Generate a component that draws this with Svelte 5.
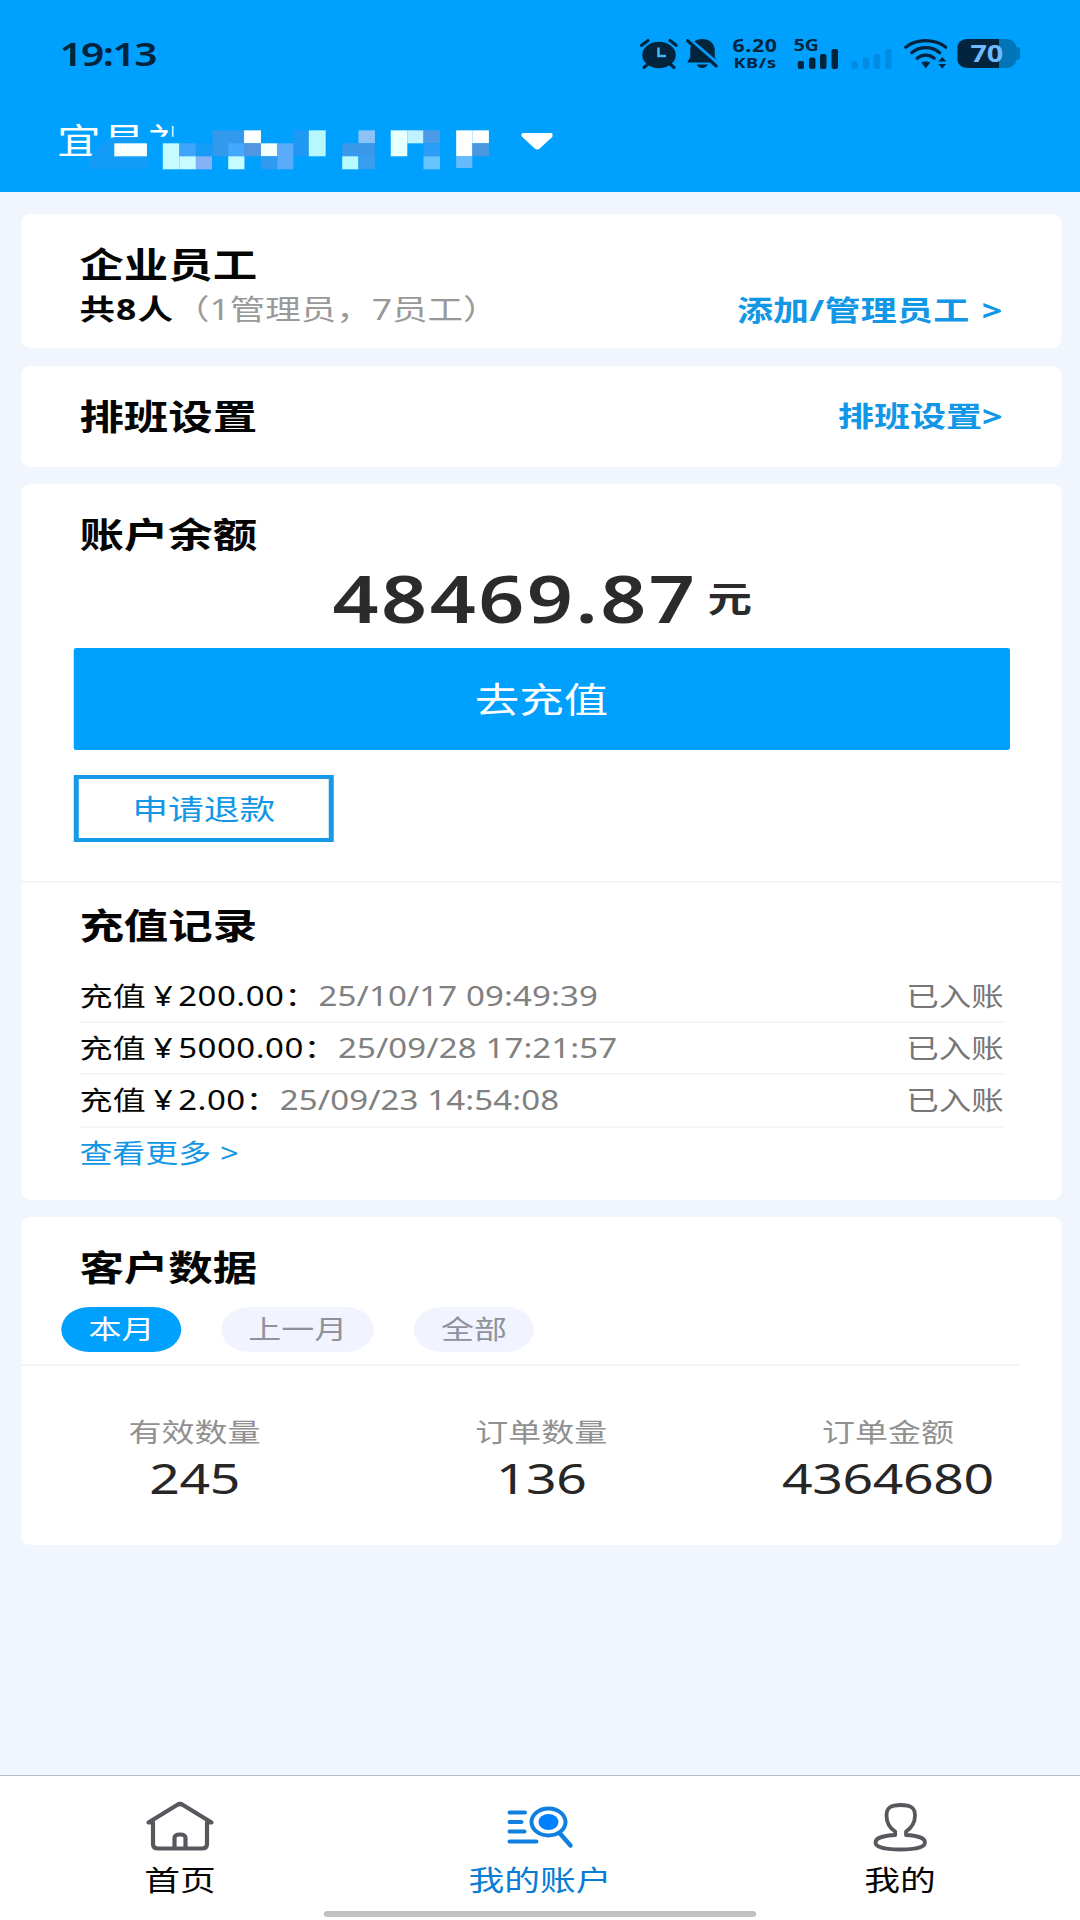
<script>
  const records = [
    { amount: "200.00", time: "25/10/17 09:49:39", status: "已入账" },
    { amount: "5000.00", time: "25/09/28 17:21:57", status: "已入账" },
    { amount: "2.00", time: "25/09/23 14:54:08", status: "已入账" },
  ];

  const ranges = ["本月", "上一月", "全部"];
  let range = $state("本月");

  const stats = [
    { label: "有效数量", value: "245" },
    { label: "订单数量", value: "136" },
    { label: "订单金额", value: "4364680" },
  ];

  // x, y, width, height, fill
  const mosaic = [
    [215, 370, 95, 39, "#f7ffff"],
    [500, 331, 92, 78, "#3399ec"],
    [592, 331, 49, 39, "#fbffff"],
    [735, 331, 45, 78, "#2099f4"],
    [780, 331, 49, 78, "#b9f7ff"],
    [924, 331, 48, 39, "#8cc2f5"],
    [1018, 331, 48, 78, "#e6ffff"],
    [1066, 331, 47, 39, "#c0f3ff"],
    [1113, 331, 48, 39, "#4a9ce8"],
    [1208, 331, 47, 78, "#ffffff"],
    [1255, 331, 48, 39, "#ffffff"],
    [356, 370, 48, 78, "#c6fcff"],
    [404, 370, 48, 39, "#3fa4fb"],
    [452, 370, 48, 39, "#159cf7"],
    [546, 370, 46, 39, "#44a8ff"],
    [592, 370, 49, 39, "#5096e0"],
    [641, 370, 47, 39, "#f4ffff"],
    [688, 370, 47, 78, "#5aacfb"],
    [877, 370, 95, 39, "#3a98ea"],
    [1113, 370, 48, 39, "#2b9df5"],
    [1255, 370, 48, 39, "#4a98e0"],
    [404, 409, 48, 39, "#c6fcff"],
    [452, 409, 47, 39, "#84b2f4"],
    [546, 409, 47, 39, "#c6fcff"],
    [641, 409, 47, 39, "#2f9af0"],
    [877, 409, 47, 39, "#b8fbff"],
    [924, 409, 48, 39, "#3a9cee"],
    [1113, 409, 48, 39, "#66c4ff"],
    [1208, 409, 47, 35, "#66bbff"],
  ];
</script>

<div class="screen">
  <header>
    <div class="status">
      <span class="clock">19:13</span>
      <svg class="alarm" viewBox="0 0 38 30" preserveAspectRatio="none">
        <ellipse cx="19" cy="16" rx="16.8" ry="13.2" fill="#02243c" />
        <path d="M1.5 6.5 8 1.5M36.5 6.5 30 1.5M8 25l-4 3.5M30 25l4 3.5" stroke="#02243c" stroke-width="3" stroke-linecap="round" />
        <path d="M18.5 8.5v8.5h7.5" fill="none" stroke="#40b4f4" stroke-width="2.6" />
      </svg>
      <svg class="bell" viewBox="0 0 32 31" preserveAspectRatio="none">
        <path d="M16 1c7 0 12.5 4.5 12.5 11v7l3 5.5H1L4 19v-7C4 5.5 9 1 16 1ZM10.5 26.5h11c-1 2.5-3 3.5-5.5 3.5s-4.5-1-5.500-3.500Z" fill="#02243c" />
        <path d="M2.5.5 32 25.5" stroke="#00a0ff" stroke-width="3" />
        <path d="M1 2.5 30 28" stroke="#02243c" stroke-width="3" stroke-linecap="round" />
      </svg>
      <span class="speed"><b>6.20</b><i>KB/s</i></span>
      <span class="signal">
        <em>5G</em>
        <svg viewBox="0 0 41 20" preserveAspectRatio="none" fill="#02243c">
          <rect x="0" y="12" width="6.5" height="8" rx="2" />
          <rect x="11.5" y="8.5" width="6.5" height="11.5" rx="2" />
          <rect x="22.5" y="5" width="6.5" height="15" rx="2" />
          <rect x="34" y="0" width="6.5" height="20" rx="2" />
        </svg>
      </span>
      <svg class="signal2" viewBox="0 0 41 20" preserveAspectRatio="none" fill="#008ce2">
        <rect x="0" y="12" width="6.5" height="8" rx="2" />
        <rect x="11.5" y="8.5" width="6.5" height="11.5" rx="2" />
        <rect x="22.5" y="5" width="6.5" height="15" rx="2" />
        <rect x="34" y="0" width="6.5" height="20" rx="2" />
      </svg>
      <svg class="wifi" viewBox="0 0 44 30" preserveAspectRatio="none">
        <g fill="none" stroke="#02243c" stroke-width="3.2" stroke-linecap="round">
          <path d="M2 8.2C13-.5 31-.5 42 8.2" />
          <path d="M8 13.800C16 7 28 7 36 13.8" />
          <path d="M13.5 19.2c5-4 12-4 17 0" />
        </g>
        <path d="M17.5 23.5q4.5-2 9 0L22 29.5ZM34.5 22.5 38.5 18l4 4.5ZM34.5 25h8l-4 4.5Z" fill="#02243c" />
      </svg>
      <span class="battery">70</span>
    </div>

    <div class="company">
      <span class="name">宜昌祁</span>
      <svg class="mask" viewBox="130 300 1190 160" preserveAspectRatio="none">
        <path d="M130 455C146 400 170 362 215 352H300V350H387V300H460V455Z" fill="#00a0ff" />
        <path d="M138 448c6-40 32-82 77-96h75v18h-75v39h95v39Z" fill="#129cf8" />
        {#each mosaic as [x, y, width, height, fill]}
          <rect {x} {y} {width} {height} {fill} />
        {/each}
      </svg>
      <svg class="caret" viewBox="0 0 32 17" preserveAspectRatio="none">
        <path d="M1.5 0h29q2.5 1 1 3.5L18.5 15.5q-2.5 2-5 0L.5 3.5Q-1 1 1.5 0Z" fill="#fff" />
      </svg>
    </div>
  </header>

  <main>
    <section class="card staff">
      <h2>企业员工</h2>
      <div class="line">
        <span><b>共8人</b><span class="muted">（1管理员，7员工）</span></span>
        <a href="#staff">添加/管理员工 &gt;</a>
      </div>
    </section>

    <section class="card shift">
      <h2>排班设置</h2>
      <a href="#shift">排班设置&gt;</a>
    </section>

    <section class="card account">
      <h2>账户余额</h2>
      <div class="balance"><strong>48469.87</strong><span>元</span></div>
      <button class="recharge">去充值</button>
      <button class="refund">申请退款</button>

      <div class="records">
        <h2>充值记录</h2>
        <ul>
          {#each records as record}
            <li>
              <span>充值<span class="yen">¥</span>{record.amount}：</span>
              <time>{record.time}</time>
              <span class="state">{record.status}</span>
            </li>
          {/each}
        </ul>
        <a class="more" href="#records">查看更多 &gt;</a>
      </div>
    </section>

    <section class="card customers">
      <h2>客户数据</h2>
      <div class="chips">
        {#each ranges as item}
          <button class:active={range === item} onclick={() => (range = item)}>{item}</button>
        {/each}
      </div>
      <div class="stats">
        {#each stats as stat}
          <div>
            <span class="label">{stat.label}</span>
            <span class="value">{stat.value}</span>
          </div>
        {/each}
      </div>
    </section>
  </main>

  <nav>
    <div class="tab">
      <svg viewBox="0 0 80 60" preserveAspectRatio="none" fill="none" stroke="#57585d" stroke-width="4.2" stroke-linecap="round" stroke-linejoin="round">
        <path d="M8.5 27.5 37 10q3-2 6 0l28.5 17.5h-4.500V49q0 4.500-5 4.500H18q-5 0-5-4.500V27.500Z" />
        <path d="M34.5 53V43q0-3.5 5.5-3.5t5.5 3.5v10" />
      </svg>
      <span>首页</span>
    </div>
    <div class="tab active">
      <svg viewBox="0 0 80 60" preserveAspectRatio="none" fill="none" stroke="#0f7fe0" stroke-width="4" stroke-linecap="round">
        <path d="M9.5 17.5h15.5M9.5 27h12M9.5 36.5h15M9.5 46.5h27" />
        <ellipse cx="48.5" cy="27" rx="17" ry="13.5" />
        <ellipse cx="48.5" cy="27" rx="10" ry="8" fill="#0080ff" stroke="none" />
        <path d="M60 38.5 70.5 50.5" stroke-width="4.4" />
      </svg>
      <span>我的账户</span>
    </div>
    <div class="tab">
      <svg viewBox="0 0 80 60" preserveAspectRatio="none" fill="none" stroke="#57585d" stroke-width="3.8" stroke-linejoin="round">
        <path d="M35.2 40v-3.5C29 32.5 26.5 28 26.5 20.5 26.5 12.5 31 10 40.7 10S55 12.5 55 20.5c0 7.5-3 12-9 16V40c12 .5 19 3.3 19 7.5 0 5-11 7-24.5 7S15.5 52.5 15.5 47.5c0-4.2 7.7-7 19.7-7.5Z" />
      </svg>
      <span>我的</span>
    </div>
    <i class="handle"></i>
  </nav>
</div>

<style>
  :global(body) {
    margin: 0;
    overflow: hidden;
    background: #f0f5fe;
  }

  /* 864 wide layout, widened to fill a 1080 display */
  .screen {
    width: 864px;
    height: 1920px;
    display: flex;
    flex-direction: column;
    transform: scaleX(1.25);
    transform-origin: 0 0;
    background: #f0f5fe;
    color: #050505;
    font-family: "Noto Sans", "Noto Sans CJK SC", sans-serif;
    font-size: 26.4px;
    line-height: 40px;
  }

  h2 {
    margin: 0;
    font-size: 35.6px;
    line-height: 48px;
    font-weight: 700;
  }

  button {
    font-family: inherit;
    padding: 0;
    border: none;
    cursor: pointer;
  }

  a {
    color: #1296e6;
    text-decoration: none;
  }

  svg {
    display: block;
    flex: none;
  }

  header {
    height: 192px;
    background: #00a0ff;
  }

  .status {
    height: 107px;
    display: flex;
    align-items: center;
    padding: 0 51px 0 47.5px;
    color: #02243c;
  }

  .clock {
    flex: 1;
    font-size: 32.5px;
    font-weight: 600;
    letter-spacing: -1.2px;
  }

  .alarm {
    width: 30.4px;
    height: 30px;
    margin-right: 6.5px;
  }

  .bell {
    width: 25.6px;
    height: 31px;
    margin-right: 10.5px;
  }

  .speed {
    width: 38px;
    display: flex;
    flex-direction: column;
    align-items: center;
    margin-right: 12px;
  }

  .speed b {
    font-size: 17px;
    line-height: 16px;
    font-weight: 700;
    letter-spacing: 0.5px;
  }

  .speed i {
    font-size: 14.5px;
    line-height: 16px;
    font-style: normal;
    font-weight: 700;
    letter-spacing: 0.5px;
  }

  .signal {
    width: 36px;
    height: 30px;
    display: flex;
    align-items: flex-end;
    justify-content: flex-end;
    position: relative;
    margin-right: 10px;
  }

  .signal em {
    position: absolute;
    top: -2px;
    left: 0;
    font-size: 15.5px;
    line-height: 16px;
    font-style: normal;
    font-weight: 700;
  }

  .signal svg {
    width: 32.8px;
    height: 20px;
  }

  .signal2 {
    width: 32.8px;
    height: 20px;
    margin: 10px 9px 0 0;
  }

  .wifi {
    width: 35.2px;
    height: 30px;
    margin-right: 8px;
  }

  .battery {
    width: 47px;
    height: 29px;
    position: relative;
    border-radius: 8px;
    background: linear-gradient(90deg, #02243c 33px, #0076b8 33px);
    color: #70bbff;
    font-size: 23px;
    line-height: 29px;
    font-weight: 700;
    text-align: center;
  }

  .battery::after {
    content: "";
    position: absolute;
    right: -3px;
    top: 8px;
    width: 3px;
    height: 13px;
    border-radius: 0 3px 3px 0;
    background: #0076b8;
  }

  .company {
    height: 68px;
    display: flex;
    align-items: center;
    position: relative;
    padding-left: 45.5px;
    color: #fff;
    font-size: 35px;
  }

  .name {
    flex: none;
    width: 371px;
    line-height: 48px;
    letter-spacing: 1.2px;
  }

  .mask {
    position: absolute;
    left: 67.8px;
    top: 13px;
    width: 327.8px;
    height: 53.3px;
  }

  .caret {
    width: 25.6px;
    height: 17px;
  }

  main {
    flex: 1;
    display: flex;
    flex-direction: column;
    gap: 18px;
    padding: 22px 15px 0 17px;
  }

  .card {
    box-sizing: border-box;
    border-radius: 8px;
    background: #fff;
    padding: 26px 47px 0 46.5px;
  }

  .staff {
    height: 134px;
  }

  .line {
    display: flex;
    justify-content: space-between;
    font-size: 28.4px;
    line-height: 43px;
  }

  .line b {
    letter-spacing: 0.9px;
  }

  .muted {
    color: #999;
  }

  .line a,
  .shift a {
    font-size: 28.8px;
    font-weight: 700;
  }

  .line a {
    letter-spacing: 0.2px;
    word-spacing: 2px;
  }

  .shift {
    height: 101px;
    display: flex;
    align-items: center;
    justify-content: space-between;
    padding-top: 0;
    padding-bottom: 2px;
    margin-bottom: -1px;
  }

  .account {
    height: 716px;
  }

  .balance {
    display: flex;
    justify-content: center;
    align-items: center;
    gap: 8px;
    height: 79px;
    padding: 0 0 11px 2px;
    color: #2b2b2b;
  }

  .balance strong {
    font-size: 64.5px;
    font-weight: 600;
    letter-spacing: 2px;
  }

  .balance span {
    font-size: 35.6px;
    font-weight: 600;
  }

  .recharge {
    display: block;
    width: 748.5px;
    height: 102px;
    margin-left: -4.5px;
    border-radius: 2px;
    background: #00a0ff;
    color: #fff;
    font-size: 35.6px;
    line-height: 102px;
  }

  .refund {
    box-sizing: border-box;
    display: block;
    width: 208px;
    height: 67px;
    margin: 25px 0 0 -4.5px;
    border: 4.5px solid #169ae8;
    background: #fff;
    color: #1296e6;
    font-size: 28.6px;
    line-height: 56px;
  }

  .records {
    margin: 39px -47px 0 -46.5px;
    padding: 18px 46px 0 46.5px;
    border-top: 2px solid #f3f4f6;
  }

  ul {
    list-style: none;
    margin: 22px 0 0;
    padding: 0;
  }

  li {
    box-sizing: border-box;
    height: 52.2px;
    display: flex;
    align-items: center;
    border-bottom: 2px solid #f5f5f5;
  }

  .yen {
    margin: 0 4px 0 6px;
  }

  li > span:first-child {
    letter-spacing: 0.4px;
  }

  time {
    margin-left: 0.5px;
    color: #808080;
    letter-spacing: 0.1px;
  }

  .state {
    margin-left: auto;
    color: #777;
    font-size: 26px;
  }

  .more {
    display: block;
    line-height: 50px;
  }

  .customers {
    height: 328px;
    margin-top: -1px;
  }

  .chips {
    display: flex;
    gap: 32px;
    margin: 16px -30px 0 -14.2px;
  }

  .chips button {
    height: 45px;
    padding: 0 21.5px;
    border-radius: 23px;
    background: #f1f4fe;
    color: #8f929c;
    font-size: 26.4px;
    line-height: 43px;
  }

  .chips button.active {
    background: #00a0ff;
    color: #fff;
  }

  .stats {
    display: flex;
    margin: 12px -47px 0 -46.5px;
    position: relative;
    padding-top: 48px;
  }

  .stats::before {
    content: "";
    position: absolute;
    left: 0;
    right: 33px;
    top: 0;
    height: 2px;
    background: #f4f5f7;
  }

  .stats div {
    flex: 1 1 0;
    display: flex;
    flex-direction: column;
    align-items: center;
  }

  .label {
    line-height: 40px;
    color: #919191;
  }

  .value {
    font-size: 42.8px;
    line-height: 51px;
    color: #262626;
    letter-spacing: -0.3px;
  }

  nav {
    box-sizing: border-box;
    height: 145px;
    display: flex;
    position: relative;
    border-top: 1px solid #b4bfc8;
    background: #fff;
  }

  .tab {
    flex: 1 1 0;
    display: flex;
    flex-direction: column;
    align-items: center;
    padding-top: 19px;
    font-size: 28.6px;
  }

  .tab.active {
    color: #0a7cd6;
  }

  .tab svg {
    width: 64px;
    height: 60px;
  }

  .tab span {
    line-height: 49px;
  }

  .handle {
    position: absolute;
    left: 259px;
    bottom: 3px;
    width: 345.5px;
    height: 6px;
    border-radius: 3px;
    background: #c1c1c1;
  }
</style>
